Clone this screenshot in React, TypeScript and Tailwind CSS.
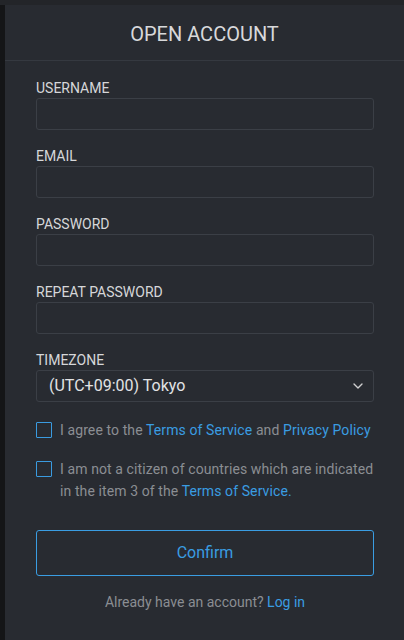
import React from 'react';
import { ChevronDown } from 'lucide-react';

const fields = ['Username', 'Email', 'Password', 'Repeat Password'];

function Field({ label }: { label: string }) {
  return (
    <div className="flex flex-col">
      <label className="mb-[2px] text-[14px] leading-[16px] uppercase text-[#d6d7d9]">{label}</label>
      <input
        type={label.toLowerCase().includes('password') ? 'password' : 'text'}
        className="h-[32px] w-full rounded-[3px] border border-[#3b3f46] bg-[#282b31] px-3 text-[15px] text-[#e0e0e0] outline-none"
      />
    </div>
  );
}

function Checkbox({ children }: { children: React.ReactNode }) {
  return (
    <div className="flex items-start gap-[8px]">
      <span className="mt-[3px] h-[16px] w-[16px] shrink-0 rounded-[1px] border-[1.5px] border-[#3a9be0]" />
      <p className="text-[14px] leading-[22px] tracking-[0.1px] text-[#8b8e93]">{children}</p>
    </div>
  );
}

export default function App() {
  return (
    <div
      className="min-h-[640px] w-[404px] bg-[#232529] pt-[5px]"
      style={{ fontFamily: 'Roboto, "Liberation Sans", sans-serif' }}
    >
      <div className="min-h-[635px] border-l-[5px] border-[#141517] bg-[#282b31]">
        <div className="flex h-[56px] items-center justify-center border-b border-[#353940] pt-[3px]">
          <h1 className="text-[20px] text-[#d8d9db]">OPEN ACCOUNT</h1>
        </div>

        <div className="pl-[31px] pr-[30px] pt-[19px]">
          <div className="flex flex-col gap-[18px]">
            {fields.map((f) => (
              <Field key={f} label={f} />
            ))}

            <div className="flex flex-col">
              <label className="mb-[2px] text-[14px] leading-[16px] text-[#d6d7d9]">TIMEZONE</label>
              <div className="flex h-[32px] items-center justify-between rounded-[3px] border border-[#3b3f46] pl-[12px] pr-[7px]">
                <span className="text-[16px] text-[#e2e3e5]">(UTC+09:00) Tokyo</span>
                <ChevronDown className="h-[16px] w-[16px] text-[#d0d0d0]" strokeWidth={2} />
              </div>
            </div>
          </div>

          <div className="mt-[17px] flex flex-col gap-[17px]">
            <Checkbox>
              I agree to the <a className="text-[#3a9de2]">Terms of Service</a> and{' '}
              <a className="text-[#3a9de2]">Privacy Policy</a>
            </Checkbox>
            <Checkbox>
              I am not a citizen of countries which are indicated in the item 3 of the{' '}
              <a className="text-[#3a9de2]">Terms of Service.</a>
            </Checkbox>
          </div>

          <button className="mt-[28px] flex h-[46px] w-full items-center justify-center rounded-[3px] border border-[#3a9de2] text-[16px] text-[#3a9de2]">
            Confirm
          </button>

          <p className="mt-[16px] text-center text-[14px] leading-[20px] text-[#8b8e93]">
            Already have an account? <a className="text-[#3a9de2]">Log in</a>
          </p>
        </div>
      </div>
    </div>
  );
}
